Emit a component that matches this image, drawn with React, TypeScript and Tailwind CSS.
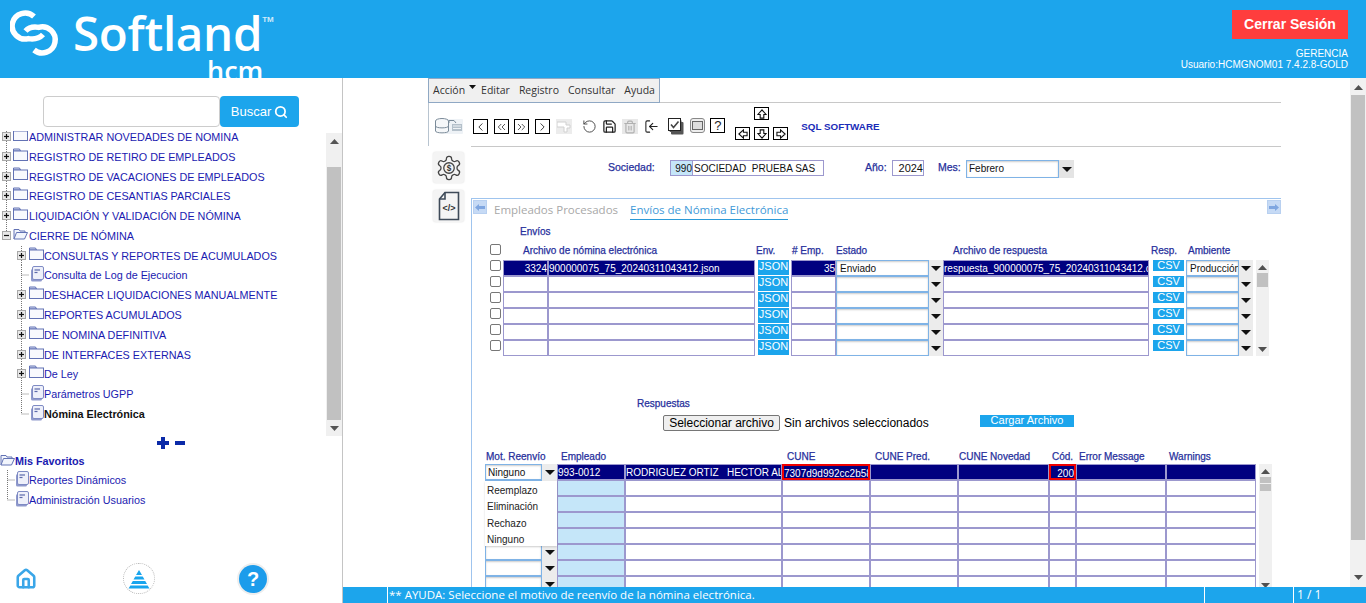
import React from 'react';
import { ChevronLeft, ChevronRight, ChevronsLeft, ChevronsRight, Home, RotateCcw, Save, Search, Trash2, LogIn } from 'lucide-react';

const Tri = ({ down = false, className = '' }: { down?: boolean; className?: string }) => (
  <svg width="9" height="5" viewBox="0 0 9 5" className={className}>
    <path d={down ? 'M0 0H9L4.5 5Z' : 'M0 5H9L4.5 0Z'} fill="currentColor" />
  </svg>
);

const Expander = ({ open, last }: { open?: boolean; last?: boolean }) => (
  <svg width="13" height="20" viewBox="0 0 13 20" className="shrink-0">
    <path d={last ? 'M6.5 0V5' : 'M6.5 0V20'} fill="none" stroke="#777" strokeDasharray="1 1" />
    <rect x="2.5" y="5.5" width="8" height="8" fill="#e8e8e8" stroke="#a8a8a8" />
    <path d="M4 9.5H9" stroke="#111" strokeWidth="1.2" />
    {!open && <path d="M6.5 7V12" stroke="#111" strokeWidth="1.2" />}
  </svg>
);

const Folder = ({ open }: { open?: boolean }) =>
  open ? (
    <svg width="15" height="14" viewBox="0 0 15 14" className="shrink-0 -mt-1">
      <path d="M1 12V2.5H6L7 4H12V5.5" fill="#f2f5fc" stroke="#6272b4" />
      <path d="M1 12L3.5 5.5H14.5L11.5 12Z" fill="#f2f5fc" stroke="#6272b4" />
    </svg>
  ) : (
    <svg width="15" height="14" viewBox="0 0 15 14" className="shrink-0 -mt-1">
      <path d="M.5 3V1H6.5L7.5 3Z" fill="#dfe4f5" stroke="#6272b4" />
      <rect x=".5" y="3" width="14" height="9.5" fill="#f8f9fd" stroke="#6272b4" />
    </svg>
  );

const Doc = () => (
  <svg width="14" height="16" viewBox="0 0 14 16" className="shrink-0 -mt-0.5">
    <rect x="1" y="3" width="11" height="12.5" rx="1.5" fill="#8f99cc" />
    <rect x="2.5" y=".5" width="11" height="13" rx="1.5" fill="#eef0fa" stroke="#7f8bc4" />
    <path d="M4.5 4H10" stroke="#5c69aa" strokeWidth="1.2" />
    <path d="M4.5 6.5H7.5" stroke="#5c69aa" strokeWidth="1.2" />
  </svg>
);

const Elbow = ({ last }: { last?: boolean }) => (
  <svg width="14" height="20" viewBox="0 0 14 20" className="shrink-0">
    <path d={last ? 'M6.5 0V10H14' : 'M6.5 0V20M6.5 10H14'} fill="none" stroke="#777" strokeDasharray="1 1" />
  </svg>
);

const linkText = 'text-[10.8px] leading-[20px] text-[#1a1ab0] whitespace-nowrap';

const TopRow = ({ label, open, last }: { label: string; open?: boolean; last?: boolean }) => (
  <div className="flex h-[19.8px] items-center">
    <Expander open={open} last={last} />
    <Folder open={open} />
    <span className={`${linkText} ml-px`}>{label}</span>
  </div>
);

const SubFolder = ({ label }: { label: string }) => (
  <div className="flex h-[19.8px] items-center pl-[15px]">
    <Expander />
    <span className="ml-px flex"><Folder /></span>
    <span className={linkText}>{label}</span>
  </div>
);

const SubDoc = ({ label, active, last }: { label: string; active?: boolean; last?: boolean }) => (
  <div className="flex h-[19.8px] items-center pl-[15px]">
    <Elbow last={last} />
    <span className="ml-px"><Doc /></span>
    <span className={active ? 'text-[10.8px] font-bold leading-[20px] text-[#111] whitespace-nowrap' : linkText}>{label}</span>
  </div>
);

const ToolBox = ({ children }: { children: React.ReactNode }) => (
  <div className="flex h-[15px] w-[15px] shrink-0 items-center justify-center border-[1.5px] border-black bg-white text-[#222]">{children}</div>
);

const BlockArrow = ({ rot }: { rot: string }) => (
  <div className="flex h-[13px] w-[15px] items-center justify-center border border-black bg-white">
    <svg width="10" height="10" viewBox="0 0 11 11" className={rot}>
      <path d="M5.5 1L10 6H7.5V10H3.5V6H1Z" fill="#fff" stroke="#111" strokeWidth="1.2" />
    </svg>
  </div>
);

const Caret = () => (
  <svg width="10" height="5" viewBox="0 0 10 5"><path d="M0 0H10L5 5Z" fill="#111" /></svg>
);

const ArrowCell = ({ w }: { w: string }) => (
  <div className={`flex h-[16px] shrink-0 items-center justify-center bg-[#ececec] ${w}`}><Caret /></div>
);

const VBar = ({ thumbs }: { thumbs: React.ReactNode }) => (
  <div className="ml-[3px] flex w-[13px] shrink-0 flex-col items-center bg-[#f0f0f0] text-[#505050]">
    <Tri className="mt-[5px] mb-[3px]" />
    {thumbs}
    <Tri down className="mt-auto mb-[4px]" />
  </div>
);

const cell = 'h-[16px] shrink-0 overflow-hidden whitespace-pre border border-[#9c98ce] px-0 text-[10px] leading-[15px]';
const sel = 'h-[16px] shrink-0 overflow-hidden whitespace-nowrap border border-[#7fb3e6] bg-white pl-[3px] text-[10px] leading-[15px] text-[#111] shadow-[inset_0_1px_2px_#ccc]';
const head = 'shrink-0 whitespace-nowrap text-[10px] leading-[14px] text-[#27309c] [-webkit-text-stroke:0.25px_#27309c]';
const formLabel = 'text-[10.5px] leading-[15px] text-[#27309c] [-webkit-text-stroke:0.25px_#27309c]';
const actionBlue = 'bg-[#1ca5ec] text-center text-white';

const Check = () => <div className="h-[11px] w-[11px] shrink-0 rounded-[2px] border border-[#777] bg-white" />;

const EnvioRow = ({ first }: { first?: boolean }) => {
  const c = first ? 'bg-[#000080] text-white' : 'bg-white';
  return (
    <div className="flex h-[16px]">
      <div className="w-[13px] shrink-0"><Check /></div>
      <div className={`${cell} ${c} w-[45px] text-right`}>{first && '3324'}</div>
      <div className={`${cell} ${c} w-[207px]`}>{first && '900000075_75_20240311043412.json'}</div>
      <div className={`${actionBlue} ml-[3px] mr-[2px] h-[15px] w-[31px] shrink-0 text-[11px] leading-[12px]`}>JSON</div>
      <div className={`${cell} ${c} w-[45px] text-right`}>{first && '35'}</div>
      <div className={`${sel} w-[93px]`}>{first && 'Enviado'}</div>
      <ArrowCell w="w-[14px]" />
      <div className={`${cell} ${c} w-[206px]`}>{first && 'respuesta_900000075_75_20240311043412.csv'}</div>
      <div className={`${actionBlue} ml-[4px] mr-[2px] h-[11px] w-[31px] shrink-0 text-[11px] leading-[10px]`}>CSV</div>
      <div className={`${sel} w-[53px]`}>{first && 'Producción'}</div>
      <ArrowCell w="w-[14px]" />
    </div>
  );
};

const RespRow = ({ first }: { first?: boolean }) => {
  const c = first ? 'bg-[#000080] text-white' : 'bg-white';
  return (
    <div className="flex h-[16px]">
      <div className={`${sel} w-[57px] !pl-[2px]`}>{first && 'Ninguno'}</div>
      <ArrowCell w="w-[15px]" />
      <div className={`${cell} w-[68px] ${first ? c : 'bg-[#c5e6f9]'}`}>{first && '993-0012'}</div>
      <div className={`${cell} ${c} w-[157px]`}>{first && 'RODRIGUEZ ORTIZ   HECTOR ALFONSO'}</div>
      <div className={`${cell} ${c} w-[88px] ${first ? 'border-2 border-[#f00000] leading-[13px]' : ''}`}>{first && '7307d9d992cc2b58a1'}</div>
      <div className={`${cell} ${c} w-[88px]`} />
      <div className={`${cell} ${c} w-[91px]`} />
      <div className={`${cell} ${c} w-[27px] text-right ${first ? 'border-2 border-[#f00000] leading-[13px]' : ''}`}>{first && '200'}</div>
      <div className={`${cell} ${c} w-[90px]`} />
      <div className={`${cell} ${c} w-[90px]`} />
    </div>
  );
};

const Logo = () => (
  <div className="flex flex-col pl-[10px] pt-[9px]">
    <div className="flex items-start">
      <svg width="51" height="49" viewBox="0 0 51 49" className="shrink-0">
        <path d="M24 7.500A13 13 0 1 0 18.400 29.600Q28 31 33 25.500" fill="none" stroke="#fff" strokeWidth="5.500" />
        <path d="M24 41A13 13 0 1 0 28.600 18.400Q20 17 15.500 22" fill="none" stroke="#fff" strokeWidth="5.500" />
      </svg>
      <span className="ml-[12px] -mt-[6px] font-['Open_Sans',sans-serif] text-[47.500px] font-semibold leading-[60px] tracking-[-0.3px] text-white">Softland</span>
      <span className="mt-[7px] text-[8px] font-bold leading-[8px] text-[#cfeafa]">TM</span>
    </div>
    <span className="-mt-[7px] ml-[197px] font-['Open_Sans',sans-serif] text-[27px] font-semibold leading-[30px] text-white">hcm</span>
  </div>
);

const Pyramid = () => (
  <div className="flex h-[31px] w-[32px] items-center justify-center rounded-full border border-dotted border-[#bbb]">
    <svg width="22" height="20" viewBox="0 0 22 20">
      <path d="M11 1L14 6H8Z" fill="#18a5ee" />
      <path d="M7.300 7.500H14.700L16.500 10.500H5.500Z" fill="#18a5ee" />
      <path d="M4.800 12H17.200L19 15H3Z" fill="#18a5ee" />
      <path d="M2.400 16.500H19.600L21.500 19.500H.5Z" fill="#18a5ee" />
    </svg>
  </div>
);

const Sidebar = () => (
  <aside className="flex w-[343px] shrink-0 flex-col border-r border-[#c4c4c4] bg-white">
    <div className="mb-[4px] mt-[18px] flex h-[31px] pl-[43px]">
      <div className="w-[177px] rounded-[4px] border border-[#ccc] bg-white" />
      <div className="flex w-[79px] items-center justify-center gap-[3px] rounded-[4px] bg-[#1ca5ec] text-[13px] text-white">
        Buscar <Search size={14} strokeWidth={3} />
      </div>
    </div>
    <div className="flex h-[305px]">
      <div className="w-[326px] overflow-hidden">
        <div className="-mt-[4px]">
          <TopRow label="ADMINISTRAR NOVEDADES DE NOMINA" />
          <TopRow label="REGISTRO DE RETIRO DE EMPLEADOS" />
          <TopRow label="REGISTRO DE VACACIONES DE EMPLEADOS" />
          <TopRow label="REGISTRO DE CESANTIAS PARCIALES" />
          <TopRow label="LIQUIDACIÓN Y VALIDACIÓN DE NÓMINA" />
          <TopRow label="CIERRE DE NÓMINA" open last />
          <SubFolder label="CONSULTAS Y REPORTES DE ACUMULADOS" />
          <SubDoc label="Consulta de Log de Ejecucion" />
          <SubFolder label="DESHACER LIQUIDACIONES MANUALMENTE" />
          <SubFolder label="REPORTES ACUMULADOS" />
          <SubFolder label="DE NOMINA DEFINITIVA" />
          <SubFolder label="DE INTERFACES EXTERNAS" />
          <SubFolder label="De Ley" />
          <SubDoc label="Parámetros UGPP" />
          <SubDoc label="Nómina Electrónica" active last />
        </div>
      </div>
      <div className="mt-[2px] flex w-[16px] flex-col items-center bg-[#f0f0f0] text-[#555]">
        <Tri className="mt-[6px]" />
        <div className="mt-[23px] h-[253px] w-[14px] bg-[#c1c1c1]" />
        <Tri down className="mt-[6px]" />
      </div>
    </div>
    <div className="ml-[157px] flex h-[14px] items-center gap-[6px]">
      <svg width="12" height="12" viewBox="0 0 12 12"><path d="M4 0H8V4H12V8H8V12H4V8H0V4H4Z" fill="#0b2aa8" /></svg>
      <svg width="10" height="4" viewBox="0 0 10 4"><rect width="10" height="4" fill="#0b2aa8" /></svg>
    </div>
    <div className="mt-[3px] flex h-[17px] items-center">
      <Folder open />
      <span className="text-[10.8px] font-bold leading-[17px] text-[#1a1ab0]">Mis Favoritos</span>
    </div>
    <div className="flex h-[20px] items-center pl-[1px]"><Elbow /><Doc /><span className={linkText}>Reportes Dinámicos</span></div>
    <div className="flex h-[20px] items-center pl-[1px]"><Elbow last /><Doc /><span className={linkText}>Administración Usuarios</span></div>
    <div className="mt-auto mb-[9px] flex items-center pl-[15px]">
      <Home size={22} color="#3aa6e8" strokeWidth={2.800} />
      <div className="ml-[86px]"><Pyramid /></div>
      <div className="ml-[84px] flex h-[28px] w-[28px] items-center justify-center rounded-full bg-[#1c9ceb] text-[20px] font-bold text-white shadow-[0_0_0_2px_#eee]">?</div>
    </div>
  </aside>
);

const Toolbar = () => (
  <div className="flex h-[43px] border-l border-[#b8c4d0]">
    <div className="ml-[6px] mt-[15px] h-[16px] w-[28px] shrink-0">
      <svg width="28" height="17" viewBox="0 0 28 17">
        <rect x="10" y="1" width="18" height="15" rx="1" fill="#eef2f6" />
        <path d="M14 5V2.500H19L21 5" fill="none" stroke="#7b8b99" />
        <rect x="17" y="6" width="10" height="7" fill="#b4c0ca" />
        <path d="M18 8H26M18 10.500H26" stroke="#f0f3f6" />
        <ellipse cx="7" cy="3" rx="6.500" ry="2.500" fill="#f5f7f9" stroke="#7b8b99" />
        <path d="M.5 3V13C.5 15.500 13.500 15.500 13.500 13V3M.5 8C.5 10.500 13.500 10.500 13.500 8" fill="#f5f7f9" stroke="#7b8b99" />
      </svg>
    </div>
    <div className="ml-[10px] mt-[16px] flex gap-[5.7px]">
      <ToolBox><ChevronLeft size={14} strokeWidth={1.6} /></ToolBox>
      <ToolBox><ChevronsLeft size={14} strokeWidth={1.4} /></ToolBox>
      <ToolBox><ChevronsRight size={14} strokeWidth={1.4} /></ToolBox>
      <ToolBox><ChevronRight size={14} strokeWidth={1.6} /></ToolBox>
      <div className="flex h-[15px] w-[16px] items-center justify-center bg-[#ececec]">
        <svg width="14" height="12" viewBox="0 0 14 12"><path d="M0 1H9V4H13V7H10V11H7V6H0Z" fill="#fff" stroke="#d0d0d0" /></svg>
      </div>
    </div>
    <div className="ml-[10px] mt-[16px] flex gap-[5.2px] text-[#222]">
      <RotateCcw size={15} strokeWidth={1.5} className="text-[#444]" />
      <Save size={15} strokeWidth={2} />
      <div className="flex h-[15px] w-[16px] items-center justify-center bg-[#e8e8e8]"><Trash2 size={14} color="#b0b0b0" /></div>
      <LogIn size={15} strokeWidth={1.7} className="ml-px rotate-180" />
    </div>
    <div className="ml-[9px] mt-[15px] flex gap-[6px]">
      <svg width="16" height="17" viewBox="0 0 16 17">
        <rect x="3" y="4" width="12.500" height="12.500" rx="1" fill="#555" />
        <rect x="1.500" y="2" width="12" height="12" rx="1" fill="#555" />
        <rect x=".5" y=".5" width="12" height="12" fill="#fff" stroke="#222" />
        <path d="M3 6.500L5.500 9.500L10.500 3.500" fill="none" stroke="#444" strokeWidth="1.6" />
      </svg>
      <div className="flex h-[15px] w-[15px] items-center justify-center rounded-[3px] border border-[#888] bg-[#eee]">
        <div className="h-[9px] w-[11px] border border-[#666] bg-[#ddd]" />
      </div>
      <div className="ml-[-1px] flex h-[15px] w-[15px] items-center justify-center border-[1.5px] border-black bg-white text-[13px] leading-none text-[#222]">?</div>
    </div>
    <div className="ml-[10px] mt-[4px] grid h-fit grid-cols-[15px_15px_15px] gap-x-[4px] gap-y-[7px]">
      <div className="col-start-2"><BlockArrow rot="" /></div>
      <div className="col-start-1"><BlockArrow rot="-rotate-90" /></div>
      <BlockArrow rot="rotate-180" />
      <BlockArrow rot="rotate-90" />
    </div>
    <span className="ml-[13px] mt-[17px] text-[9.800px] font-bold leading-[14px] text-[#1a2cb8]">SQL SOFTWARE</span>
  </div>
);

const FormHead = () => (
  <div className="mt-[13px] flex h-[19px] items-start">
    <span className={`${formLabel} ml-[137px] w-[62px]`}>Sociedad:</span>
    <div className="h-[16px] w-[23px] shrink-0 border border-[#9c98ce] bg-[#c5e6f9] text-right text-[10px] leading-[15px] text-[#111]">990</div>
    <div className="h-[16px] w-[131px] shrink-0 whitespace-pre border border-l-0 border-[#9c98ce] bg-white pl-px text-[10px] leading-[15px] text-[#111]">SOCIEDAD  PRUEBA SAS</div>
    <span className={`${formLabel} ml-[41px] w-[27px]`}>Año:</span>
    <div className="h-[16px] w-[32px] shrink-0 border border-[#9c98ce] bg-white text-right text-[11px] leading-[15px] text-[#111]">2024</div>
    <span className={`${formLabel} ml-[14px] w-[28px]`}>Mes:</span>
    <div className="h-[18px] w-[93px] shrink-0 border border-[#7fb3e6] bg-white pl-[2px] text-[10px] leading-[16px] text-[#111] shadow-[inset_0_1px_2px_#ccc]">Febrero</div>
    <div className="flex h-[18px] w-[15px] items-center justify-center bg-[#e4e4e4]"><Caret /></div>
  </div>
);

const Tabs = () => (
  <div className="flex h-[21px] pl-px">
    <div className="mt-px flex h-[14px] w-[14px] items-center justify-center border border-[#b8d0f0] bg-[#c6daf5]">
      <svg width="10" height="7" viewBox="0 0 10 7"><path d="M0 3.500L4 0V2H10V5H4V7Z" fill="#7fa6e0" /></svg>
    </div>
    <span className="ml-[7px] font-['Open_Sans',sans-serif] text-[11.500px] leading-[21px] text-[#a8a8a8]">Empleados Procesados</span>
    <span className="ml-[12px] h-[21px] border-b border-[#2a9ad8] font-['Open_Sans',sans-serif] text-[11.500px] leading-[21px] text-[#3f9ad8]">Envíos de Nómina Electrónica</span>
    <div className="ml-auto mt-px flex h-[14px] w-[14px] items-center justify-center border border-[#b8d0f0] bg-[#c6daf5]">
      <svg width="10" height="7" viewBox="0 0 10 7"><path d="M10 3.500L6 0V2H0V5H6V7Z" fill="#7fa6e0" /></svg>
    </div>
  </div>
);

const Envios = () => (
  <div>
    <div className={`${head} ml-[48px] mt-[5px] h-[12px] leading-[12px]`}>Envíos</div>
    <div className="ml-[18px] mt-[7px] flex h-[16px]">
      <div className="w-[13px] shrink-0"><Check /></div>
      <span className={`${head} w-[252px] pl-[20px]`}>Archivo de nómina electrónica</span>
      <span className={`${head} w-[36px] pl-px`}>Env.</span>
      <span className={`${head} w-[45px] pl-px`}># Emp.</span>
      <span className={`${head} w-[107px]`}>Estado</span>
      <span className={`${head} w-[206px] pl-[10px]`}>Archivo de respuesta</span>
      <span className={`${head} w-[37px] pl-[2px]`}>Resp.</span>
      <span className={`${head} pl-[2px]`}>Ambiente</span>
    </div>
    <div className="ml-[18px] flex">
      <div>
        <EnvioRow first />
        <EnvioRow />
        <EnvioRow />
        <EnvioRow />
        <EnvioRow />
        <EnvioRow />
      </div>
      <VBar thumbs={<div className="h-[14px] w-[11px] bg-[#c1c1c1]" />} />
    </div>
  </div>
);

const Upload = () => (
  <div>
    <div className={`${head} ml-[165px] mt-[41px] h-[12px] leading-[12px]`}>Respuestas</div>
    <div className="ml-[191px] mt-[6px] flex h-[16px] items-start">
      <div className="h-[16px] w-[117px] shrink-0 rounded-[2px] border border-[#767676] bg-[#efefef] text-center text-[12px] leading-[14px] text-black">Seleccionar archivo</div>
      <span className="ml-[4px] w-[196px] shrink-0 text-[12px] leading-[16px] text-black">Sin archivos seleccionados</span>
      <div className={`${actionBlue} h-[12px] w-[94px] text-[11px] leading-[11px]`}>Cargar Archivo</div>
    </div>
  </div>
);

const Respuestas = () => (
  <div>
    <div className="ml-[13px] mt-[19px] flex h-[14px]">
      <span className={`${head} w-[72px] pl-px`}>Mot. Reenvío</span>
      <span className={`${head} w-[225px] pl-[4px]`}>Empleado</span>
      <span className={`${head} w-[88px] pl-[5px]`}>CUNE</span>
      <span className={`${head} w-[88px] pl-[5px]`}>CUNE Pred.</span>
      <span className={`${head} w-[91px] pl-px`}>CUNE Novedad</span>
      <span className={`${head} w-[27px] pl-[3px]`}>Cód.</span>
      <span className={`${head} w-[90px] pl-[3px]`}>Error Message</span>
      <span className={`${head} pl-[3px]`}>Warnings</span>
    </div>
    <div className="relative ml-[13px] flex">
      <div>
        <RespRow first />
        <RespRow />
        <RespRow />
        <RespRow />
        <RespRow />
        <RespRow />
        <RespRow />
        <RespRow />
      </div>
      <VBar thumbs={
        <div className="flex flex-col gap-px">
          <div className="h-[6px] w-[11px] bg-[#c1c1c1]" />
          <div className="h-[7px] w-[11px] bg-[#c1c1c1]" />
        </div>
      } />
      <div className="absolute left-0 top-[17px] h-[65px] w-[72px] bg-white pl-[2px] pt-[2px] text-[10px] leading-[16.400px] text-[#222] shadow-[0_1px_2px_rgba(0,0,0,0.15)]">
        <div>Reemplazo</div>
        <div>Eliminación</div>
        <div>Rechazo</div>
        <div>Ninguno</div>
      </div>
    </div>
  </div>
);

const Form = () => (
  <div className="flex min-h-0 w-[938px] shrink-0 flex-col overflow-hidden pl-[85px]">
    <div className="flex h-[25px] shrink-0">
      <div className="flex h-[25px] w-[232px] items-center gap-[9px] border border-[#8fa8c4] bg-[#f0f0f0] pl-[4px] font-['Open_Sans',sans-serif] text-[10.500px] text-[#333]">
        <span className="flex items-start">Acción<svg width="7" height="4" viewBox="0 0 7 4" className="ml-[4px] mt-[2px]"><path d="M0 0H7L3.500 4Z" fill="#111" /></svg></span>
        <span className="-ml-[4px]">Editar</span>
        <span>Registro</span>
        <span>Consultar</span>
        <span>Ayuda</span>
      </div>
      <div className="flex-1 border-b border-[#c8c8c8]" />
    </div>
    <div className="shrink-0"><Toolbar /></div>
    <div className="flex min-h-0 flex-1">
      <div className="flex w-[43px] shrink-0 flex-col pl-[5px] pt-[6px]">
        <div className="flex h-[31px] w-[31px] items-center justify-center rounded-[3px] bg-[#f4f4f4] shadow-[0_0_2px_#ddd]">
          <svg width="28" height="28" viewBox="0 0 24 24" fill="none" stroke="#444" strokeWidth="1.1">
            <path d="M12.220 2h-.440a2 2 0 0 0-2 2v.180a2 2 0 0 1-1 1.730l-.430.250a2 2 0 0 1-2 0l-.150-.080a2 2 0 0 0-2.730.730l-.220.380a2 2 0 0 0 .730 2.730l.150.100a2 2 0 0 1 1 1.720v.510a2 2 0 0 1-1 1.740l-.150.090a2 2 0 0 0-.730 2.730l.220.380a2 2 0 0 0 2.730.730l.150-.080a2 2 0 0 1 2 0l.430.250a2 2 0 0 1 1 1.730V20a2 2 0 0 0 2 2h.440a2 2 0 0 0 2-2v-.180a2 2 0 0 1 1-1.730l.430-.250a2 2 0 0 1 2 0l.150.080a2 2 0 0 0 2.730-.730l.220-.390a2 2 0 0 0-.730-2.730l-.150-.080a2 2 0 0 1-1-1.740v-.500a2 2 0 0 1 1-1.740l.150-.090a2 2 0 0 0 .730-2.730l-.220-.380a2 2 0 0 0-2.730-.730l-.150.080a2 2 0 0 1-2 0l-.430-.250a2 2 0 0 1-1-1.730V4a2 2 0 0 0-2-2z" />
            <circle cx="12" cy="12" r="4.500" />
            <text x="12" y="14.500" textAnchor="middle" fontSize="7" fontWeight="700" fill="#333" stroke="none" fontFamily="Liberation Sans">$</text>
          </svg>
        </div>
        <div className="mt-[7px] flex h-[32px] w-[31px] items-center justify-center rounded-[3px] bg-[#f4f4f4] shadow-[0_0_2px_#ddd]">
          <svg width="24" height="30" viewBox="0 0 24 30" fill="none" stroke="#3e4a58" strokeWidth="1.600">
            <path d="M8 1.500H21.500V28.500H2.500V8Z" />
            <path d="M2.500 8H8V1.500" />
            <text x="12" y="20" textAnchor="middle" fontSize="9" fontWeight="700" fill="#333" stroke="none" fontFamily="Liberation Sans">&lt;/&gt;</text>
          </svg>
        </div>
      </div>
      <div className="flex min-w-0 flex-1 flex-col border-t border-[#c8c8c8]">
        <FormHead />
        <div className="mt-[19px] min-h-0 flex-1 overflow-hidden border-l border-t border-[#9fc4ee]">
          <Tabs />
          <Envios />
          <Upload />
          <Respuestas />
        </div>
      </div>
    </div>
  </div>
);

const PageScroll = () => (
  <div className="ml-auto flex w-[16px] shrink-0 flex-col items-center bg-[#f1f1f1] text-[#505050]">
    <Tri className="mt-[7px]" />
    <div className="mt-[5px] h-[445px] w-[14px] bg-[#c1c1c1]" />
    <Tri down className="mt-auto mb-[7px]" />
  </div>
);

export default function App() {
  return (
    <div className="flex h-[603px] w-[1366px] flex-col overflow-hidden bg-white font-['Liberation_Sans',Arial,sans-serif]">
      <header className="flex h-[78px] shrink-0 justify-between overflow-hidden bg-[#1ca5ec]">
        <Logo />
        <div className="flex flex-col items-end pr-[18px] pt-[10px] text-[10px] leading-[11px] text-white">
          <div className="mb-[9px] flex h-[29px] w-[116px] items-center justify-center bg-[#ff3d3d] text-[14px] font-bold">Cerrar Sesión</div>
          <span>GERENCIA</span>
          <span>Usuario:HCMGNOM01 7.4.2.8-GOLD</span>
        </div>
      </header>
      <div className="flex min-h-0 flex-1">
        <Sidebar />
        <main className="flex min-w-0 flex-1 flex-col">
          <div className="flex min-h-0 flex-1">
            <Form />
            <PageScroll />
          </div>
          <footer className="flex h-[16px] shrink-0 bg-[#1ca5ec] font-['Open_Sans',sans-serif] text-[11.500px] leading-[16px] text-white">
            <div className="ml-[44px] w-[817px] whitespace-nowrap border-l border-white pl-[1px]">** AYUDA: Seleccione el motivo de reenvío de la nómina electrónica.</div>
            <div className="w-[89px] border-l border-white" />
            <div className="border-l border-white pl-[3px] text-[12px]">1 / 1</div>
          </footer>
        </main>
      </div>
    </div>
  );
}
